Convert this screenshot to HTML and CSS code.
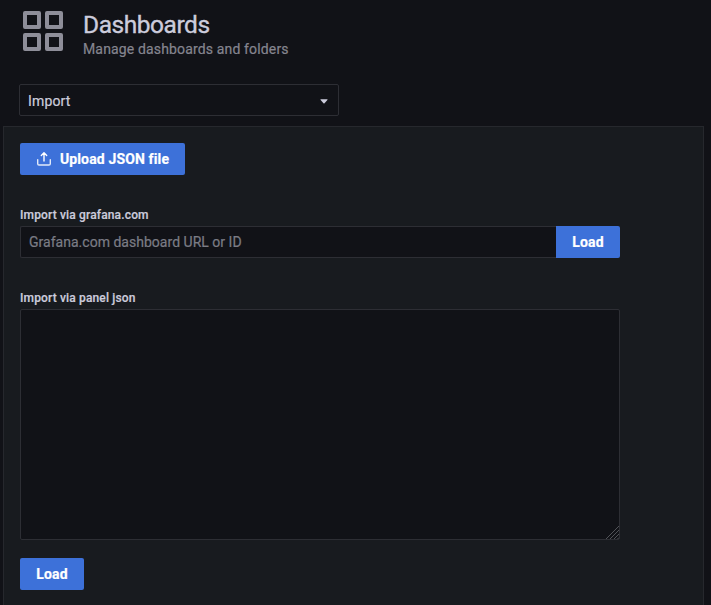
FILE: index.html
```html
<!DOCTYPE html>
<html lang="en">
<head>
<meta charset="utf-8">
<title>Dashboards</title>
<link rel="stylesheet" href="styles.css">
</head>
<body>
<header class="page-header">
  <svg class="page-icon" viewBox="0 0 40 40" fill="none" stroke="currentColor" stroke-width="4" stroke-linejoin="round">
    <rect x="2" y="2" width="14" height="14"/><rect x="24" y="2" width="14" height="14"/>
    <rect x="2" y="24" width="14" height="14"/><rect x="24" y="24" width="14" height="14"/>
  </svg>
  <div class="heading">
    <h1>Dashboards</h1>
    <p>Manage dashboards and folders</p>
  </div>
</header>
<div class="select"><span>Import</span>
  <svg class="caret" viewBox="0 0 8 5"><path d="M.8.3h6.4q.6.2.2.8L4.5 4.2q-.5.5-1 0L.6 1.1Q.2.5.8.3z" fill="currentColor"/></svg>
</div>
<main class="panel">
  <button class="btn upload">
    <svg class="upload-icon" viewBox="0 0 16 16" fill="none" stroke="currentColor" stroke-width="1.4" stroke-linecap="round" stroke-linejoin="round">
      <path d="M1.7 8.6v4.1q0 1.3 1.3 1.3h10q1.3 0 1.3-1.3V8.6" opacity=".85"/><path d="M8 10V1.9M5.3 4.5 8 1.8l2.7 2.7"/>
    </svg>
    <span>Upload JSON file</span>
  </button>
  <label class="label" for="url">Import via grafana.com</label>
  <div class="row">
    <input id="url" class="field" type="text" placeholder="Grafana.com dashboard URL or ID">
    <button class="btn load joined">Load</button>
  </div>
  <label class="label" for="json">Import via panel json</label>
  <div class="json-wrap">
    <textarea id="json" class="json"></textarea>
    <svg class="grip" viewBox="0 0 13 13" stroke="currentColor" fill="none"><path d="M0 13 13 0M4 13l9-9M8 13l5-5M11.5 13l1.5-1.5"/></svg>
  </div>
  <button class="btn load">Load</button>
</main>
</body>
</html>
```
FILE: styles.css
```css
* { box-sizing: border-box; }
body {
  margin: 0;
  height: 605px;
  overflow: hidden;
  display: flex;
  flex-direction: column;
  background: #111217;
  color: #ccccdc;
  font: 14px/22px Roboto, sans-serif;
  -webkit-text-stroke: .2px currentColor;
}
.page-header { display: flex; height: 84px; padding: 11px 0 0 23px; }
.page-icon { width: 40px; height: 40px; margin-right: 20px; color: #8e8e99; }
h1 { margin: 0; font-size: 24.5px; line-height: 28px; font-weight: 400; letter-spacing: -.45px; -webkit-text-stroke-width: .35px; }
.heading p { margin: 0; font-size: 14px; line-height: 20px; color: #85858f; letter-spacing: .15px; }
.select {
  display: flex;
  flex: none;
  align-items: center;
  justify-content: space-between;
  width: 320px;
  height: 32px;
  margin-left: 19px;
  padding: 2px 10px 0 8px;
  border: 1px solid #2d2e34;
  border-radius: 2px;
  letter-spacing: .15px;
}
.caret { width: 8px; height: 5px; }
.panel {
  display: flex;
  flex: 1;
  flex-direction: column;
  align-items: flex-start;
  width: 701px;
  margin: 10px 0 0 3px;
  padding: 16px 16px 0;
  border: 1px solid #26282d;
  border-bottom: 0;
  background: #181b1f;
}
.btn {
  display: flex;
  flex: none;
  align-items: center;
  justify-content: center;
  height: 32px;
  padding: 0;
  border: 0;
  border-radius: 2px;
  background: #3d71d9;
  color: #fff;
  font: 700 14px/32px Roboto, sans-serif;
  letter-spacing: .14px;
}
.upload { width: 165px; gap: 8px; }
.upload-icon { width: 16px; height: 16px; }
.load { width: 64px; }
.label { margin-top: 32px; height: 19px; font-size: 12px; line-height: 16px; font-weight: 500; letter-spacing: .15px; }
.row { display: flex; width: 600px; height: 32px; }
.field {
  flex: 1;
  min-width: 0;
  padding: 0 8px;
  border: 1px solid #2d2e34;
  border-right: 0;
  border-radius: 2px 0 0 2px;
  outline: 0;
  background: #111217;
  color: #ccccdc;
  font: 14px Roboto, sans-serif;
  letter-spacing: .02px;
}
.field::placeholder { color: #7b7c85; opacity: 1; }
.joined { border-radius: 0 2px 2px 0; }
.json-wrap { position: relative; width: 600px; height: 231px; margin-bottom: 18px; flex: none; }
.json {
  display: block;
  width: 100%;
  height: 100%;
  border: 1px solid #2d2e34;
  border-radius: 2px;
  outline: 0;
  resize: none;
  background: #111217;
  color: #ccccdc;
}
.grip { position: absolute; right: 1px; bottom: 1px; width: 13px; height: 13px; color: #63646a; stroke-width: .8; }
```
